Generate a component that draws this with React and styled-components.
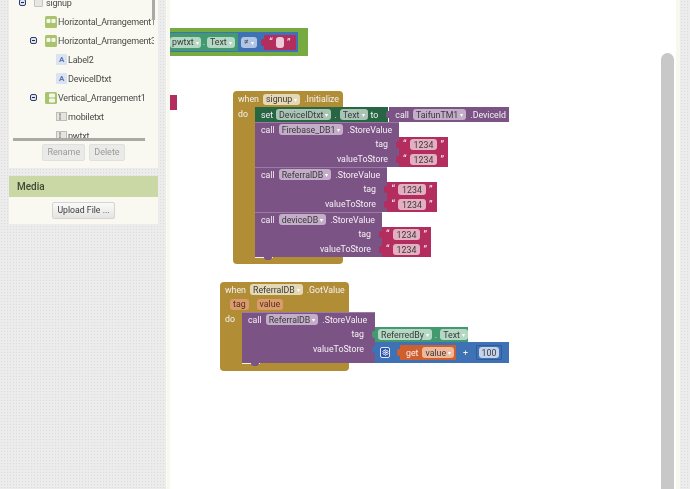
import styled, { createGlobalStyle } from "styled-components";
import { Settings } from "lucide-react";

const GlobalStyle = createGlobalStyle`
  html, body {
    margin: 0;
    padding: 0;
    background: #fff;
  }
  body {
    font-family: Roboto, "Liberation Sans", sans-serif;
  }
`;

const Page = styled.div`
  display: flex;
  width: 690px;
  height: 489px;
  overflow: hidden;
  filter: blur(0.3px);
`;

const Texture = styled.div`
  background-color: #ececec;
  background-image: radial-gradient(#dcdcdc 0.8px, transparent 1px);
  background-size: 3px 3px;
`;

const LeftColumn = styled(Texture)`
  flex: none;
  width: 149px;
  padding: 0 8px 0 9px;
  border-right: 4px solid #f8f8f0;
  display: flex;
  flex-direction: column;
  gap: 8px;
`;

const Panel = styled.div`
  background: #f9f9f2;
`;

const TreeViewport = styled.div`
  position: relative;
  width: 145px;
  height: 138px;
`;

const TreeClip = styled.div`
  height: 138px;
  overflow: hidden;
`;

const TreeList = styled.div`
  margin-top: -7px;
`;

const TreeRow = styled.div`
  display: flex;
  align-items: center;
  height: 19px;
  padding-left: ${(p) => p.$level * 11 + 10}px;
  white-space: nowrap;
  font-size: 9px;
  letter-spacing: -0.2px;
  color: #4a4a48;
`;

const ExpanderSlot = styled.div`
  flex: none;
  width: 15px;
`;

const Expander = styled.div`
  position: relative;
  width: 7px;
  height: 7px;
  border: 1px solid #2f3d6b;
  border-radius: 2px;
  box-sizing: border-box;
  background: #dfe4f2;

  &::after {
    content: "";
    position: absolute;
    left: 1px;
    right: 1px;
    top: 2px;
    height: 1px;
    background: #1d2850;
  }
`;

const VScroll = styled.div`
  position: absolute;
  right: -1px;
  top: 0;
  width: 3px;
  height: 20px;
  background: #a9a9a5;
`;

const HScroll = styled.div`
  height: 3px;
  margin: 0 13px 0 4px;
  background: #a9a9a5;
`;

const ButtonRow = styled.div`
  display: flex;
  justify-content: center;
  gap: 4px;
  padding: 3px 0 7px;
`;

const FlatButton = styled.div`
  height: 15px;
  line-height: 15px;
  padding: 0 4px;
  font-size: ${(p) => (p.$active ? 8.7 : 9)}px;
  color: ${(p) => (p.$active ? "#3c3c3c" : "#9a9a98")};
  background: ${(p) => (p.$active ? "linear-gradient(#fafafa, #e4e4e2)" : "#eaeae8")};
  border: 1px solid ${(p) => (p.$active ? "#d4d4d0" : "#e0e0dc")};
  border-radius: 2px;
`;

const PanelHead = styled.div`
  height: 21px;
  line-height: 21px;
  padding-left: 8px;
  font-size: 10px;
  font-weight: 500;
  color: #3e4a33;
  background: #c9d8a5;
`;

const PanelBody = styled.div`
  display: flex;
  justify-content: center;
  padding: 5px 0;
`;

const Canvas = styled.div`
  position: relative;
  flex: 1;
  height: 489px;
  overflow: hidden;
  background: #fff;
`;

const RightEdge = styled(Texture)`
  flex: none;
  width: 10px;
  border-left: 4px solid #f8f8f0;
`;

const PageScroll = styled.div`
  position: absolute;
  right: 2px;
  top: 53px;
  bottom: -10px;
  width: 13px;
  border-radius: 7px 7px 0 0;
  background: #c8c8c8;
`;

const Placed = styled.div`
  position: absolute;
  left: ${(p) => p.$left}px;
  top: ${(p) => p.$top}px;
  width: ${(p) => p.$width}px;
  font-size: 8.8px;
  color: #f4f0f4;
  white-space: nowrap;
`;

const EventHead = styled.div`
  display: flex;
  align-items: center;
  gap: 4px;
  height: ${(p) => p.$height}px;
  padding-left: 5px;
  background: #b18e35;
  border-radius: 4px 4px 0 0;
`;

const ParamRow = styled.div`
  display: flex;
  align-items: center;
  gap: 8px;
  height: 15px;
  padding-left: 10px;
  background: #b18e35;
`;

const Param = styled.div`
  height: 11px;
  line-height: 11px;
  padding: 0 3px;
  border-radius: 3px;
  color: #4a3518;
  background: #dc9a6e;
`;

const DoRow = styled.div`
  display: flex;
`;

const DoGutter = styled.div`
  flex: none;
  width: ${(p) => p.$width}px;
  padding: 2px 0 0 5px;
  box-sizing: border-box;
  background: #b18e35;
`;

const Stack = styled.div`
  display: flex;
  flex: none;
  flex-direction: column;
`;

const EventFoot = styled.div`
  position: relative;
  height: ${(p) => p.$height}px;
  background: #b18e35;
  border-radius: 0 0 4px 4px;

  &::before {
    content: "";
    position: absolute;
    left: 22px;
    top: 0;
    width: 18px;
    height: 1px;
    background: #f6f0e0;
  }
`;

const Nub = styled.div`
  position: absolute;
  left: 31px;
  top: 0;
  width: 8px;
  height: 3px;
  border-radius: 0 0 3px 3px;
  background: #7c5385;
`;

const RowBlock = styled.div`
  display: flex;
  align-items: center;
  gap: ${(p) => p.$gap ?? 4}px;
  flex: none;
  width: ${(p) => (p.$width ? `${p.$width}px` : "auto")};
  height: ${(p) => p.$height ?? 15}px;
  padding: 0 ${(p) => p.$padRight ?? 0}px 0 ${(p) => p.$padLeft ?? 6}px;
  box-sizing: border-box;
  background: ${(p) => p.$color};
`;

const CallBlock = styled.div`
  flex: none;
  width: ${(p) => p.$width}px;
  background: #7c5385;
  box-shadow: inset 0 1px 0 #9a7ba2;
`;

const ArgRow = styled.div`
  display: flex;
  align-items: flex-start;
  justify-content: flex-end;
  height: ${(p) => p.$height ?? 15}px;
`;

const ArgLabel = styled.div`
  padding-right: 11px;
  line-height: 15px;
`;

const Socket = styled.div`
  width: 0;
  height: 100%;
  display: flex;
  padding-left: ${(p) => p.$offset ?? 0}px;
`;

const ValueBlock = styled(RowBlock)`
  position: relative;

  &::before {
    content: "";
    position: absolute;
    left: -3px;
    top: 4px;
    width: 3px;
    height: 7px;
    border-radius: 2px 0 0 2px;
    background: ${(p) => p.$color};
  }
`;

const TextBlock = styled(ValueBlock).attrs({ $color: "#b32d5e", $padLeft: 0, $gap: 3 })`
  justify-content: center;
  font-size: 10px;
`;

const Chip = styled.div`
  display: flex;
  align-items: center;
  gap: 2px;
  height: 11px;
  padding: 0 ${(p) => p.$pad ?? 3}px;
  border-radius: 3px;
  font-size: 8.8px;
  color: #3a3a3a;
  background: ${(p) => p.$tint};
`;

const NumberBlock = styled.div`
  display: flex;
  align-items: center;
  justify-content: center;
  flex: none;
  width: 26px;
  height: 15px;
  box-sizing: border-box;
  border: 1px solid #2f5c9c;
  border-radius: 1px;
`;

const Arrow = styled.span`
  font-size: 6px;
  color: #fff;
`;

const GearBox = styled.div`
  display: flex;
  align-items: center;
  justify-content: center;
  flex: none;
  width: 10px;
  height: 11px;
  border: 1px solid #dfe8f6;
  border-radius: 2px;
  background: #2b55b0;
  color: #fff;
  box-sizing: border-box;
`;

const Spacer = styled.div`
  flex: none;
  width: ${(p) => p.$width}px;
`;

const tints = {
  gold: "#e4d8b6",
  purple: "#c3adc8",
  green: "#a9c4b5",
  teal: "#b4d8c4",
  pink: "#e3b0c2",
  orange: "#eeb89c",
  blue: "#b0c4e4",
};

const ArrangementIcon = ({ vertical }) => (
  <svg width="12" height="12" viewBox="0 0 12 12" style={{ flex: "none", marginRight: 1 }}>
    <rect width="12" height="12" rx="1.5" fill="#a9c46c" />
    {vertical ? (
      <>
        <rect x="4" y="1.5" width="6" height="4" rx="1" fill="#f4f6ec" />
        <rect x="4" y="6.5" width="6" height="4" rx="1" fill="#f4f6ec" />
      </>
    ) : (
      <>
        <rect x="1.5" y="3" width="4" height="4" rx="1" fill="#f4f6ec" />
        <rect x="6.5" y="3" width="4" height="4" rx="1" fill="#f4f6ec" />
      </>
    )}
  </svg>
);

const LabelIcon = styled.div`
  flex: none;
  width: 11px;
  height: 11px;
  line-height: 11px;
  margin-right: 1px;
  border-radius: 1px;
  text-align: center;
  font-size: 8px;
  font-weight: 700;
  color: #5a78b8;
  background: #dbe3f0;
`;

const InputIcon = () => (
  <svg width="11" height="9" viewBox="0 0 11 9" style={{ flex: "none", marginRight: 1 }}>
    <rect x="0.5" y="0.5" width="10" height="8" fill="#e4e4e0" stroke="#bdbdb8" />
    <path d="M3 2h2M4 2v5M3 7h2" stroke="#8a8a86" fill="none" />
  </svg>
);

const CheckIcon = styled.div`
  flex: none;
  width: 9px;
  height: 9px;
  margin-right: 3px;
  box-sizing: border-box;
  border: 1px solid #c4c4c0;
  border-radius: 1px;
  background: #e6e6e4;
`;

const treeItems = [
  { level: 0, text: "signup", expand: true, icon: <CheckIcon /> },
  { level: 1, text: "Horizontal_Arrangement1", icon: <ArrangementIcon /> },
  { level: 1, text: "Horizontal_Arrangement3", expand: true, icon: <ArrangementIcon /> },
  { level: 2, text: "Label2", icon: <LabelIcon>A</LabelIcon> },
  { level: 2, text: "DeviceIDtxt", icon: <LabelIcon>A</LabelIcon> },
  { level: 1, text: "Vertical_Arrangement1", expand: true, icon: <ArrangementIcon vertical /> },
  { level: 2, text: "mobiletxt", icon: <InputIcon /> },
  { level: 2, text: "pwtxt", icon: <InputIcon /> },
];

const TextValue = ({ width }) => (
  <TextBlock $width={width}>
    <span>“</span>
    <Chip $tint={tints.pink} $pad={4}>
      1234
    </Chip>
    <span>”</span>
  </TextBlock>
);

const StoreCall = ({ width, db, valueWidth }) => (
  <CallBlock $width={width}>
    <RowBlock $color="transparent">
      call
      <Chip $tint={tints.purple}>
        {db}
        <Arrow>▾</Arrow>
      </Chip>
      .StoreValue
    </RowBlock>
    <ArgRow>
      <ArgLabel>tag</ArgLabel>
      <Socket>
        <TextValue width={valueWidth} />
      </Socket>
    </ArgRow>
    <ArgRow>
      <ArgLabel>valueToStore</ArgLabel>
      <Socket>
        <TextValue width={valueWidth} />
      </Socket>
    </ArgRow>
  </CallBlock>
);

export default function App() {
  return (
    <Page>
      <GlobalStyle />
      <LeftColumn>
        <Panel>
          <TreeViewport>
            <TreeClip>
              <TreeList>
                {treeItems.map((item) => (
                  <TreeRow key={item.text} $level={item.level}>
                    <ExpanderSlot>{item.expand && <Expander />}</ExpanderSlot>
                    {item.icon}
                    {item.text}
                  </TreeRow>
                ))}
              </TreeList>
            </TreeClip>
            <VScroll />
          </TreeViewport>
          <HScroll />
          <ButtonRow>
            <FlatButton>Rename</FlatButton>
            <FlatButton>Delete</FlatButton>
          </ButtonRow>
        </Panel>
        <Panel>
          <PanelHead>Media</PanelHead>
          <PanelBody>
            <FlatButton $active>Upload File ...</FlatButton>
          </PanelBody>
        </Panel>
      </LeftColumn>

      <Canvas>
        <Placed $left={-10} $top={28} $width={148}>
          <RowBlock $color="#77ab41" $height={28} $padLeft={0} $padRight={10}>
            <RowBlock $color="#3f71b5" $width={138} $height={20} $padLeft={0} $gap={0}>
              <RowBlock $color="#439970" $width={78} $height={18} $padLeft={10} $gap={2}>
                <Chip $tint={tints.teal} $pad={2}>
                  pwtxt
                  <Arrow>▾</Arrow>
                </Chip>
                .
                <Chip $tint={tints.teal}>
                  Text
                  <Arrow>▾</Arrow>
                </Chip>
              </RowBlock>
              <Spacer $width={3} />
              <Chip $tint={tints.blue}>
                ≠<Arrow>▾</Arrow>
              </Chip>
              <Spacer $width={7} />
              <TextBlock $width={32} $height={15}>
                <span>“</span>
                <Chip $tint="#eccbd8" $pad={3}>
                  &nbsp;
                </Chip>
                <span>”</span>
              </TextBlock>
            </RowBlock>
          </RowBlock>
        </Placed>

        <Placed $left={0} $top={95} $width={7}>
          <RowBlock $color="#b32d5e" $padLeft={0} />
        </Placed>

        <Placed $left={63} $top={91} $width={110}>
          <EventHead $height={16}>
            when
            <Chip $tint={tints.gold}>
              signup
              <Arrow>▾</Arrow>
            </Chip>
            .Initialize
          </EventHead>
          <DoRow>
            <DoGutter $width={22}>do</DoGutter>
            <Stack>
              <RowBlock $color="#266643" $width={133} $gap={3}>
                set
                <Chip $tint={tints.green}>
                  DeviceIDtxt
                  <Arrow>▾</Arrow>
                </Chip>
                .
                <Chip $tint={tints.green}>
                  Text
                  <Arrow>▾</Arrow>
                </Chip>
                to
                <Socket $offset={8}>
                  <ValueBlock $color="#7c5385" $width={120} $padLeft={6}>
                    call
                    <Chip $tint={tints.purple}>
                      TaifunTM1
                      <Arrow>▾</Arrow>
                    </Chip>
                    .DeviceId
                  </ValueBlock>
                </Socket>
              </RowBlock>
              <StoreCall width={144} db="Firebase_DB1" valueWidth={49} />
              <StoreCall width={132} db="ReferralDB" valueWidth={50} />
              <StoreCall width={127} db="deviceDB" valueWidth={49} />
            </Stack>
          </DoRow>
          <EventFoot $height={7}>
            <Nub />
          </EventFoot>
        </Placed>

        <Placed $left={50} $top={282} $width={129}>
          <EventHead $height={15}>
            when
            <Chip $tint={tints.gold}>
              ReferralDB
              <Arrow>▾</Arrow>
            </Chip>
            .GotValue
          </EventHead>
          <ParamRow>
            <Param>tag</Param>
            <Param>value</Param>
          </ParamRow>
          <DoRow>
            <DoGutter $width={22}>do</DoGutter>
            <CallBlock $width={133}>
              <RowBlock $color="transparent">
                call
                <Chip $tint={tints.purple}>
                  ReferralDB
                  <Arrow>▾</Arrow>
                </Chip>
                .StoreValue
              </RowBlock>
              <ArgRow>
                <ArgLabel>tag</ArgLabel>
                <Socket>
                  <ValueBlock $color="#439970" $width={93} $padLeft={3} $gap={3}>
                    <Chip $tint={tints.teal}>
                      ReferredBy
                      <Arrow>▾</Arrow>
                    </Chip>
                    .
                    <Chip $tint={tints.teal}>
                      Text
                      <Arrow>▾</Arrow>
                    </Chip>
                  </ValueBlock>
                </Socket>
              </ArgRow>
              <ArgRow $height={21}>
                <ArgLabel>valueToStore</ArgLabel>
                <Socket>
                  <ValueBlock $color="#3f71b5" $width={134} $height={21} $padLeft={5} $padRight={6} $gap={0}>
                    <GearBox>
                      <Settings size={7} strokeWidth={3} />
                    </GearBox>
                    <Spacer $width={10} />
                    <ValueBlock $color="#d05f2d" $width={56} $padLeft={6}>
                      get
                      <Chip $tint={tints.orange}>
                        value
                        <Arrow>▾</Arrow>
                      </Chip>
                    </ValueBlock>
                    <Spacer $width={7} />
                    +
                    <Spacer $width={8} />
                    <NumberBlock>
                      <Chip $tint="#c4d4ec">100</Chip>
                    </NumberBlock>
                  </ValueBlock>
                </Socket>
              </ArgRow>
            </CallBlock>
          </DoRow>
          <EventFoot $height={8}>
            <Nub />
          </EventFoot>
        </Placed>

        <PageScroll />
      </Canvas>
      <RightEdge />
    </Page>
  );
}
